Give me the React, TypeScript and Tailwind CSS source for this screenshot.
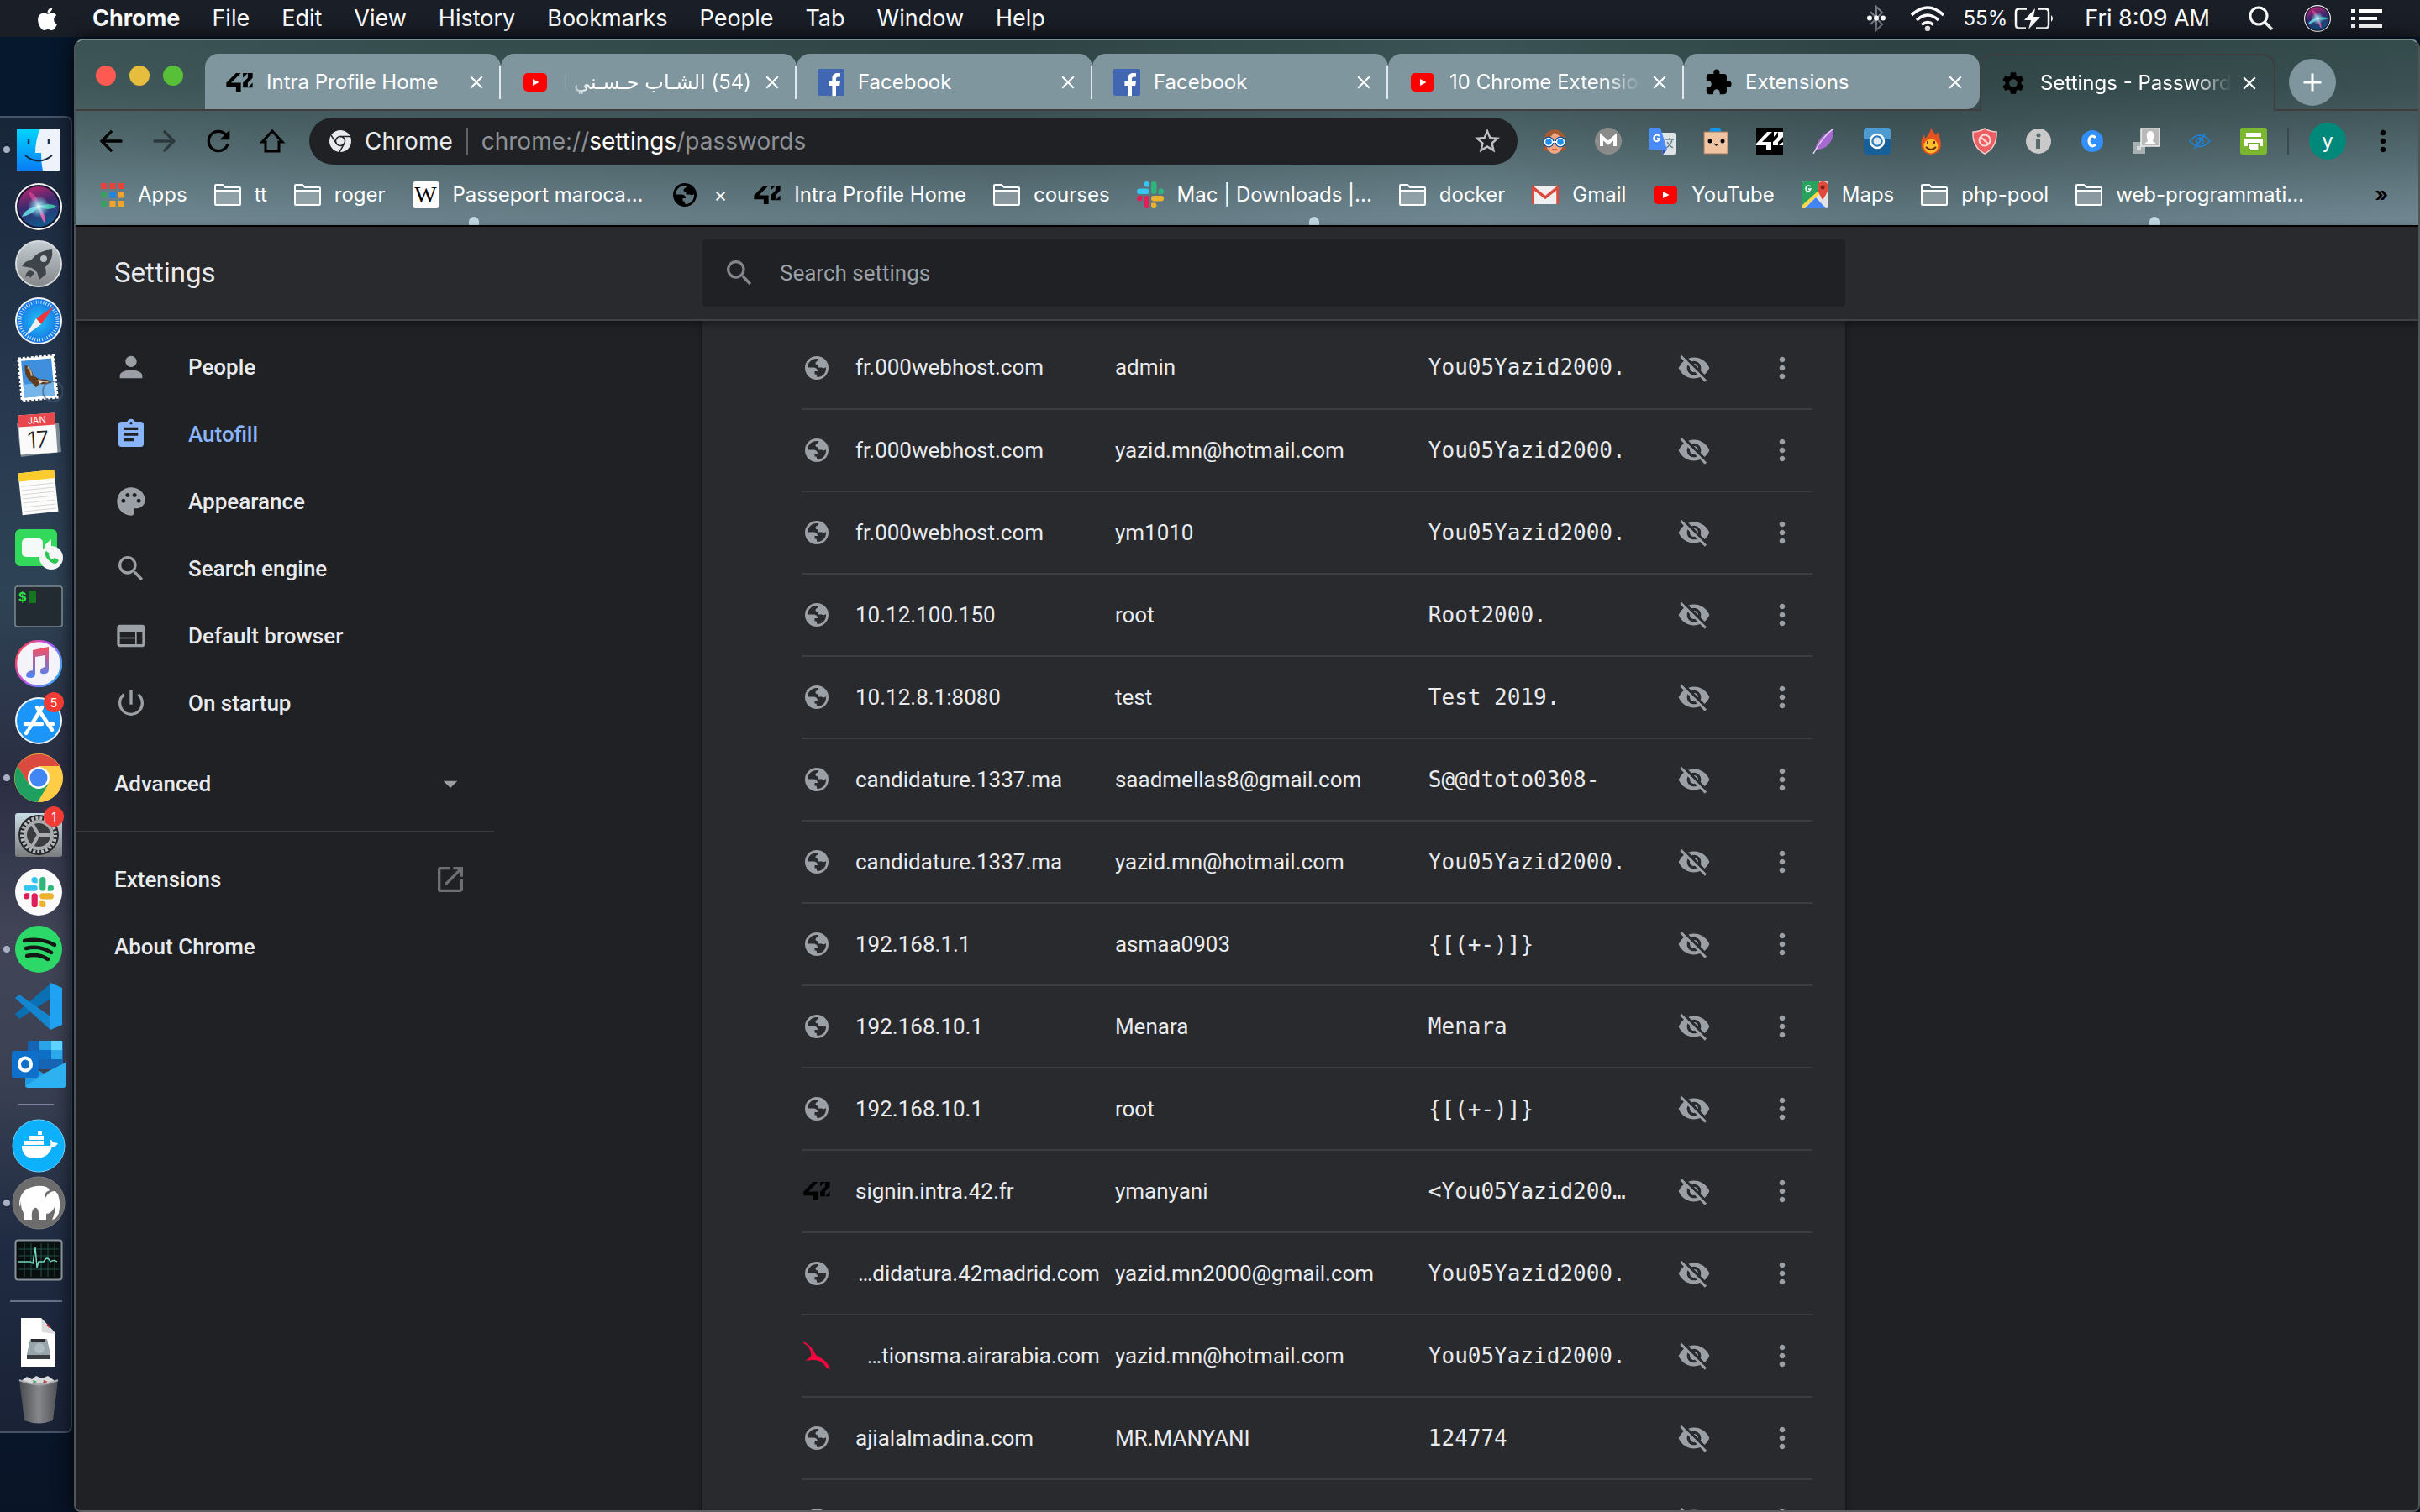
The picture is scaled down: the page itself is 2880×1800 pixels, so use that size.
import type { ReactNode } from "react";
import {
  MdAdd,
  MdArrowBack,
  MdArrowDropDown,
  MdArrowForward,
  MdAssignment,
  MdClose,
  MdExtension,
  MdMoreVert,
  MdOpenInNew,
  MdPalette,
  MdPerson,
  MdPowerSettingsNew,
  MdRefresh,
  MdSearch,
  MdSettings,
  MdStarBorder,
  MdVisibilityOff,
  MdWeb,
} from "react-icons/md";
import { FaApple } from "react-icons/fa";

/* ---------- shared glyphs ---------- */

function Logo42({ className }: { className: string }) {
  return (
    <svg viewBox="32 -52 896 630" className={className} fill="currentColor" aria-hidden="true">
      <polygon points="32,412.6 362.1,412.6 362.1,578 526.8,578 526.8,279.1 197.3,279.1 526.8,-51.1 362.1,-51.1 32,279.1" />
      <polygon points="597.9,114.2 762.7,-51.1 597.9,-51.1" />
      <polygon points="762.7,114.2 597.9,279.1 597.9,443.9 762.7,443.9 762.7,279.1 928,114.2 928,-51.1 762.7,-51.1" />
      <polygon points="928,279.1 762.7,443.9 928,443.9" />
    </svg>
  );
}

function GlobeIcon({ className }: { className: string }) {
  return (
    <svg viewBox="0 0 28 28" className={className} fill="currentColor" fillRule="evenodd" aria-hidden="true">
      <path d="M14 0a14 14 0 1 1 0 28 14 14 0 0 1 0-28zM3 13.500h7c3 0 5 1.500 5 4.500h-3.500v3.500h2l1 3.500C20.500 25 25 20.500 25 14.500c0-.5 0-1-.2-1.500-1.300 1.500-3.300 1.800-4.800.5h-4.500v-3c-1.500 0-3-.8-3-2.200C12.500 6 16 6.500 16 3.300 9 2 3 7.500 3 13.500z" />
    </svg>
  );
}

function YouTubeIcon() {
  return (
    <svg viewBox="0 0 30 22" className="h-[22px] w-[30px]" aria-hidden="true">
      <rect x="1" width="28" height="22" rx="5" fill="#ff0000" />
      <path d="M12 7l7.5 4-7.5 4z" fill="#fff" />
    </svg>
  );
}

function FacebookIcon() {
  return (
    <svg viewBox="0 0 32 32" className="h-8 w-8" aria-hidden="true">
      <rect width="32" height="32" rx="2" fill="#4267b2" />
      <path d="M22 32V20h4.2l.7-5H22v-3c0-1.5.6-2.4 2.6-2.4H27V5.300c-.6-.1-2-.2-3.500-.2-3.600 0-6.100 2.100-6.100 6.200V15h-4v5h4v12z" fill="#fff" />
    </svg>
  );
}

function FolderIcon() {
  return (
    <svg viewBox="0 0 32 26" className="h-[26px] w-8" aria-hidden="true">
      <path d="M1 24V2q0-1 1-1h8l3 3h17q1 0 1 1v19q0 1-1 1H2q-1 0-1-1z" fill="none" stroke="#fff" strokeWidth="2" />
      <path d="M2 8h28v16H2z" fill="#ffffff" fillOpacity="0.280" />
      <path d="M1 8h30" stroke="#fff" strokeWidth="2" />
    </svg>
  );
}

function SlackMark({ className }: { className: string }) {
  return (
    <svg viewBox="0 0 54 54" className={className} aria-hidden="true">
      <path fill="#36c5f0" d="M19.700 0a5.400 5.400 0 0 0 0 10.800h5.400V5.400A5.400 5.400 0 0 0 19.700 0m0 14.400H5.400a5.400 5.400 0 0 0 0 10.800h14.300a5.400 5.400 0 0 0 0-10.800" />
      <path fill="#2eb67d" d="M54 19.800a5.400 5.400 0 1 0-10.800 0v5.400h5.400a5.400 5.400 0 0 0 5.400-5.400m-14.400 0V5.400a5.400 5.400 0 1 0-10.800 0v14.400a5.400 5.400 0 1 0 10.800 0" />
      <path fill="#ecb22e" d="M34.200 54a5.400 5.400 0 0 0 0-10.800h-5.400v5.400a5.400 5.400 0 0 0 5.400 5.400m0-14.400h14.400a5.400 5.400 0 0 0 0-10.800H34.200a5.400 5.400 0 0 0 0 10.800" />
      <path fill="#e01e5a" d="M0 34.200a5.400 5.400 0 0 0 10.800 0v-5.400H5.400A5.400 5.400 0 0 0 0 34.200m14.400 0v14.400a5.400 5.400 0 1 0 10.800 0V34.200a5.400 5.400 0 1 0-10.800 0" />
    </svg>
  );
}

function SiriIcon({ className }: { className: string }) {
  return (
    <svg viewBox="0 0 56 56" className={className} aria-hidden="true">
      <defs>
        <radialGradient id="siriCore">
          <stop offset="0" stopColor="#fff" />
          <stop offset="0.400" stopColor="#8fe6f5" stopOpacity="0.700" />
          <stop offset="1" stopColor="#8fe6f5" stopOpacity="0" />
        </radialGradient>
        <linearGradient id="siriBase" x1="0.300" y1="0" x2="0.600" y2="1">
          <stop offset="0" stopColor="#b3266f" />
          <stop offset="0.450" stopColor="#3b2a6e" />
          <stop offset="1" stopColor="#0e5a8c" />
        </linearGradient>
      </defs>
      <circle cx="28" cy="28" r="28" fill="#f2f2f2" />
      <circle cx="28" cy="28" r="26" fill="#15122f" />
      <circle cx="28" cy="28" r="24" fill="url(#siriBase)" />
      <path d="M28 28Q14 28 8 40q12-2 20-12z" fill="#6ef0f5" fillOpacity="0.800" />
      <path d="M28 28q2 14 8 21 1-12-8-21z" fill="#f25fb0" fillOpacity="0.900" />
      <path d="M28 28q12-6 22 0-10 6-22 0z" fill="#43e0b5" fillOpacity="0.800" />
      <path d="M28 28Q18 20 16 10q12 4 12 18z" fill="#e0479b" fillOpacity="0.700" />
      <circle cx="28" cy="28" r="13" fill="url(#siriCore)" />
    </svg>
  );
}

/* ---------- menu bar ---------- */

const menus = ["File", "Edit", "View", "History", "Bookmarks", "People", "Tab", "Window", "Help"];

function MenuBar() {
  return (
    <header className="flex h-11 shrink-0 items-center justify-between bg-[#1a1e27] pr-11 pl-10 text-[27px] text-white">
      <nav aria-label="Menu bar" className="flex items-center gap-[38px]">
        <button type="button" aria-label="Apple menu" className="flex w-8 justify-center">
          <FaApple className="h-[31px] w-[31px]" />
        </button>
        <button type="button" className="font-bold">Chrome</button>
        {menus.map((m) => (
          <button type="button" key={m}>{m}</button>
        ))}
      </nav>
      <div className="flex items-center">
        <svg viewBox="0 0 24 32" className="h-8 w-6" aria-hidden="true">
          <path d="M5 8l14 15-7 7V2l7 7L5 23" fill="none" stroke="#777b84" strokeWidth="2" />
          <g fill="#fff">
            <circle cx="4" cy="15.500" r="3" />
            <circle cx="12" cy="15.500" r="3" />
            <circle cx="20" cy="15.500" r="3" />
          </g>
        </svg>
        <svg viewBox="0 0 42 30" className="ml-7 h-[30px] w-[42px]" fill="none" stroke="#fff" strokeWidth="3.500" aria-hidden="true">
          <path d="M2 11q19-18 38 0M8 17q13-12 26 0M14 22.500q7-6 14 0" />
          <circle cx="21" cy="27" r="1.500" fill="#fff" />
        </svg>
        <span className="ml-[22px] text-[24px]">55%</span>
        <svg viewBox="0 0 48 26" className="ml-2 h-[26px] w-12" fill="none" stroke="#fff" strokeWidth="2.500" aria-hidden="true">
          <path d="M15 1.500H6Q2 1.500 2 5.500v15q0 4 4 4h8M28 1.500h9q4 0 4 4v15q0 4-4 4H26" />
          <path d="M44 9q4 4 0 8z" fill="#fff" stroke="none" />
          <path d="M25 1L12 15h8l-3 11 14-15h-8z" fill="#fff" stroke="none" />
        </svg>
        <span className="ml-9">Fri 8:09 AM</span>
        <svg viewBox="0 0 30 30" className="ml-[46px] h-[30px] w-[30px]" fill="none" stroke="#fff" strokeWidth="3" aria-hidden="true">
          <circle cx="12" cy="12" r="10" />
          <path d="M19 19l9 9" strokeWidth="3.500" />
        </svg>
        <SiriIcon className="ml-9 h-8 w-8" />
        <svg viewBox="0 0 38 22" className="ml-6 h-[22px] w-[38px]" fill="#fff" aria-hidden="true">
          <path d="M0 0h5v4H0zM9 0h28v4H9zM0 9h5v4H0zM9 9h22v4H9zM0 18h5v4H0zM9 18h28v4H9z" />
        </svg>
      </div>
    </header>
  );
}

/* ---------- dock ---------- */

function DockIcon({ label, running, badge, children }: { label: string; running?: boolean; badge?: string; children: ReactNode }) {
  return (
    <li className="relative flex h-[68px] items-center pl-[14px]">
      {running && <span className="absolute left-1 h-2 w-2 rounded-full bg-[#a9b1c6]" />}
      <button type="button" aria-label={label} className="flex h-16 w-16 items-center justify-center">
        {children}
      </button>
      {badge && (
        <span className="absolute top-0 right-2 flex h-6 w-6 items-center justify-center rounded-full bg-[#f13b35] text-[14px] text-white">
          {badge}
        </span>
      )}
    </li>
  );
}

function Dock() {
  return (
    <aside className="mt-[94px] w-[86px] shrink-0 self-start rounded-r-lg border-t-2 border-r-2 border-b-2 border-[#46546a] bg-[linear-gradient(180deg,#18263a_0%,#28394f_22%,#2e4355_36%,#2b2e43_50%,#404456_62%,#3c4254_72%,#1f2b42_86%,#1a2236_100%)] pt-1 pb-1">
      <ul>
        <DockIcon label="Finder" running>
          <svg viewBox="0 0 52 50" className="h-[50px] w-[52px]">
            <defs>
              <linearGradient id="finderBlue" x1="0" y1="0" x2="0" y2="1">
                <stop offset="0" stopColor="#00d6ff" />
                <stop offset="1" stopColor="#0a7cf5" />
              </linearGradient>
            </defs>
            <rect width="52" height="50" rx="2" fill="#eef2fa" />
            <path d="M2 0h26q-6 14-6 29h7q0 12 2 21H2q-2 0-2-2V2q0-2 2-2z" fill="url(#finderBlue)" />
            <path d="M14 13v6M38 13v6" stroke="#16334f" strokeWidth="2.500" />
            <path d="M10 32q16 13 32 0" fill="none" stroke="#152a42" strokeWidth="2" />
          </svg>
        </DockIcon>
        <DockIcon label="Siri"><SiriIcon className="h-14 w-14" /></DockIcon>
        <DockIcon label="Launchpad">
          <svg viewBox="0 0 56 56" className="h-14 w-14">
            <defs>
              <linearGradient id="padGrey" x1="0" y1="0" x2="0" y2="1">
                <stop offset="0" stopColor="#c3cdd2" />
                <stop offset="1" stopColor="#848789" />
              </linearGradient>
            </defs>
            <circle cx="28" cy="28" r="27" fill="url(#padGrey)" stroke="#d7d9db" strokeWidth="2" />
            <path d="M44 11q2 12-8 21l1 8-8 7-3-9-6-5-12-2q4-7 11-7 8-12 25-13z" fill="#3f444a" />
            <path d="M17 36q6 1 6 4-3 1-5 5l-2-3-4 2q1-6 5-8z" fill="#3f444a" />
            <circle cx="34" cy="22" r="4" fill="#b9c1c5" />
          </svg>
        </DockIcon>
        <DockIcon label="Safari">
          <svg viewBox="0 0 56 56" className="h-14 w-14">
            <defs>
              <radialGradient id="safariBlue">
                <stop offset="0" stopColor="#20c2f5" />
                <stop offset="1" stopColor="#1673e6" />
              </radialGradient>
            </defs>
            <circle cx="28" cy="28" r="28" fill="#f3f4f5" />
            <circle cx="28" cy="28" r="26" fill="url(#safariBlue)" />
            <circle cx="28" cy="28" r="22.500" fill="none" stroke="#d4ebfb" strokeWidth="4" strokeDasharray="1 2" />
            <path d="M46 11L31 32l-6-7z" fill="#f5333a" />
            <path d="M12 46l13-21 6 7z" fill="#eef0f2" />
          </svg>
        </DockIcon>
        <DockIcon label="Mail">
          <svg viewBox="0 0 58 58" className="h-[58px] w-[58px]">
            <g transform="rotate(-5 29 29)">
              <rect x="7" y="4" width="42" height="50" fill="#fff" stroke="#fff" strokeWidth="3" strokeDasharray="3 2" />
              <rect x="10" y="7" width="36" height="44" fill="#3f8fdc" />
              <rect x="10" y="35" width="36" height="16" fill="#76b5ea" />
              <path d="M14 12q8 4 9 14l8 5q8-1 13 5l-10 1-5-1-4 4-3-4-5-6q-5-6-3-18z" fill="#5e3c22" />
              <path d="M17 15q4 4 4 11M33 33l7 2" stroke="#c9a982" strokeWidth="2" fill="none" />
              <path d="M28 31l7 2-5 3z" fill="#e8dccb" />
            </g>
            <circle cx="46" cy="45" r="12" fill="none" stroke="#425a76" strokeWidth="2" strokeOpacity="0.600" />
          </svg>
        </DockIcon>
        <DockIcon label="Calendar">
          <svg viewBox="0 0 58 56" className="h-14 w-[58px]">
            <path d="M3 14l5 40 48-6-3-34z" fill="#7b8791" />
            <g transform="rotate(-4 28 28)">
              <rect x="6" y="3" width="44" height="47" fill="#fafafa" />
              <rect x="6" y="3" width="44" height="14" fill="#e8474b" />
              <text x="28" y="14" textAnchor="middle" fontSize="11" fill="#fff" fontFamily="Inter, sans-serif">JAN</text>
              <text x="28" y="43" textAnchor="middle" fontSize="27" fill="#222" fontFamily="Inter, sans-serif" fontWeight="300">17</text>
            </g>
          </svg>
        </DockIcon>
        <DockIcon label="Notes">
          <svg viewBox="0 0 58 58" className="h-[58px] w-[58px]">
            <g transform="rotate(-6 29 29)">
              <rect x="7" y="4" width="43" height="50" fill="#fcfcfa" />
              <rect x="7" y="4" width="43" height="10" fill="#fccb2e" />
              <path d="M9 20h39M9 25h39M9 30h39M9 35h39M9 40h39M9 45h39M9 50h39" stroke="#d5d7d9" strokeWidth="1" />
            </g>
          </svg>
        </DockIcon>
        <DockIcon label="FaceTime">
          <svg viewBox="0 0 58 50" className="h-[50px] w-[58px]">
            <rect x="1" y="1" width="50" height="44" rx="6" fill="#33d95b" />
            <rect x="9" y="12" width="25" height="22" rx="5" fill="#f6faf6" />
            <path d="M36 20l8-7v16l-8-4z" fill="#f6faf6" />
            <circle cx="44" cy="35" r="14" fill="#f4f6f5" />
            <path d="M38 27q-4 3 2 10 7 7 11 4l2-3-5-3-3 2q-3-2-4-5l1-2z" fill="#2bc653" />
          </svg>
        </DockIcon>
        <DockIcon label="Terminal">
          <svg viewBox="0 0 58 50" className="h-[50px] w-[58px]">
            <rect x="1" y="1" width="56" height="48" rx="3" fill="#222b32" stroke="#7d8a93" strokeWidth="1.500" />
            <text x="5" y="19" fontSize="16" fontWeight="700" fill="#2eea46" fontFamily="'Liberation Mono', monospace">$</text>
            <rect x="18" y="6" width="8" height="15" fill="#14771f" />
          </svg>
        </DockIcon>
        <DockIcon label="iTunes">
          <svg viewBox="0 0 56 56" className="h-14 w-14">
            <defs>
              <linearGradient id="tunes" x1="0" y1="0.300" x2="1" y2="0.900">
                <stop offset="0" stopColor="#fb4657" />
                <stop offset="0.400" stopColor="#b94ff0" />
                <stop offset="1" stopColor="#1fb8fb" />
              </linearGradient>
              <linearGradient id="tunesNote" x1="0" y1="0" x2="0" y2="1">
                <stop offset="0" stopColor="#fb4c60" />
                <stop offset="1" stopColor="#4a86f5" />
              </linearGradient>
            </defs>
            <circle cx="28" cy="28" r="27" fill="#f4f3f9" stroke="url(#tunes)" strokeWidth="2.500" />
            <path d="M21 12l19-4v27q0 5-5 5-5 1-5-3 0-4 6-5V18l-12 2v20q0 5-6 5-5 0-5-3 0-5 8-6z" fill="url(#tunesNote)" />
          </svg>
        </DockIcon>
        <DockIcon label="App Store" badge="5">
          <svg viewBox="0 0 56 56" className="h-14 w-14">
            <circle cx="28" cy="28" r="28" fill="#f1f4f7" />
            <circle cx="28" cy="28" r="26" fill="#1b95f7" />
            <path d="M12 32h20M39 32h6M32 12L17 37M26 12l18 27M15 40l-2 3" stroke="#fff" strokeWidth="4.500" strokeLinecap="round" />
          </svg>
        </DockIcon>
        <DockIcon label="Chrome" running>
          <svg viewBox="0 0 58 58" className="h-[58px] w-[58px]">
            <circle cx="29" cy="29" r="29" fill="#ffcd45" />
            <path d="M54 15A29 29 0 0 0 4 15l13 21 12-21z" fill="#db4a3e" />
            <path d="M4 15a29 29 0 0 0 24 43l13-22-12 6-12-6z" fill="#20a060" />
            <path d="M29 15h25a29 29 0 0 1-26 43l13-22z" fill="#ffcd45" />
            <circle cx="29" cy="29" r="13" fill="#fff" />
            <circle cx="29" cy="29" r="10.500" fill="#4285f4" />
          </svg>
        </DockIcon>
        <DockIcon label="System Preferences" badge="1">
          <svg viewBox="0 0 58 54" className="h-[54px] w-[58px]">
            <defs>
              <linearGradient id="prefs" x1="0" y1="0" x2="0" y2="1">
                <stop offset="0" stopColor="#c9dde4" />
                <stop offset="1" stopColor="#7b7d80" />
              </linearGradient>
            </defs>
            <rect x="1" y="1" width="56" height="52" rx="3" fill="url(#prefs)" />
            <circle cx="29" cy="27" r="24" fill="#26282b" />
            <circle cx="29" cy="27" r="20" fill="none" stroke="#b9bcbf" strokeWidth="4" strokeDasharray="3 2" />
            <circle cx="29" cy="27" r="16" fill="#3a3c3f" stroke="#a9acaf" strokeWidth="4" />
            <path d="M29 27h16M29 27l-8-14M29 27l-8 14" stroke="#a9acaf" strokeWidth="4" />
          </svg>
        </DockIcon>
        <DockIcon label="Slack">
          <span className="flex h-14 w-14 items-center justify-center rounded-full bg-[#fafafa]">
            <SlackMark className="h-9 w-9" />
          </span>
        </DockIcon>
        <DockIcon label="Spotify" running>
          <svg viewBox="0 0 56 56" className="h-14 w-14">
            <circle cx="28" cy="28" r="28" fill="#2cd868" />
            <path d="M11 18q20-4 36 5M13 27q16-4 30 5M14 36q14-3 25 4" fill="none" stroke="#141714" strokeWidth="4.500" strokeLinecap="round" />
          </svg>
        </DockIcon>
        <DockIcon label="Visual Studio Code">
          <svg viewBox="0 0 56 56" className="h-14 w-14">
            <path d="M0 37l42-36v18L5 43z" fill="#0b6fb3" />
            <path d="M0 18l5-4 37 26v16z" fill="#1386cf" />
            <path d="M42 0l14 6v44l-14 6z" fill="#1fa2f1" />
          </svg>
        </DockIcon>
        <DockIcon label="Outlook">
          <svg viewBox="0 0 64 58" className="h-[58px] w-16">
            <rect x="19" y="2" width="42" height="34" rx="2" fill="#1565b4" />
            <path d="M33 2h14v11H33z" fill="#2aa4e8" />
            <path d="M47 2h13v11H47z" fill="#5ed3ff" />
            <path d="M47 13h13v11H47z" fill="#2ba9ea" />
            <path d="M33 13h14v11H33z" fill="#0f6fc4" />
            <path d="M16 28l24 14 24-14v27q0 3-3 3H19q-3 0-3-3z" fill="#1f9ae3" />
            <path d="M16 56l24-16 24-12v27q0 3-3 3H19z" fill="#2db1f0" />
            <rect y="14" width="32" height="32" rx="3" fill="#0f70cb" />
            <ellipse cx="16" cy="30" rx="7" ry="7.500" fill="none" stroke="#fff" strokeWidth="4" />
          </svg>
        </DockIcon>
        <li className="flex h-[30px] items-center pl-[22px]"><span className="h-0.5 w-[42px] bg-[#79819a]" /></li>
        <DockIcon label="Docker">
          <svg viewBox="0 0 64 64" className="h-16 w-16">
            <circle cx="32" cy="32" r="31" fill="#0db0fb" stroke="#6fd1fb" strokeWidth="1" />
            <path d="M12 32h33q3-1 0-8 3 1 4 4l6 1q-3 5-7 4-4 14-20 14-16 0-16-15z" fill="#fff" />
            <path d="M15 26h5v5h-5zM21 26h5v5h-5zM27 26h5v5h-5zM33 26h5v5h-5zM21 20h5v5h-5zM27 20h5v5h-5zM33 20h5v5h-5zM31 15h5v4h-5z" fill="#fff" />
          </svg>
        </DockIcon>
        <DockIcon label="MAMP" running>
          <svg viewBox="0 0 64 64" className="h-16 w-16">
            <circle cx="32" cy="32" r="31" fill="#6c6c6c" stroke="#7d7d7d" strokeWidth="1" />
            <path d="M9 34q0-19 20-22 14-1 16 5-8 3-5 9 5-9 12-8 6 6 5 20-1 13-9 14 4-8 3-15-4 8-10 8v7H32q1-16-5-14-4 2-3 14H15q0-8-3-12-1-3-1-11l-1 8z" fill="#fff" />
          </svg>
        </DockIcon>
        <DockIcon label="Activity Monitor">
          <svg viewBox="0 0 58 50" className="h-[50px] w-[58px]">
            <rect x="1.500" y="1.500" width="55" height="47" rx="3" fill="#0b0e0e" stroke="#87929b" strokeWidth="2" />
            <path d="M5 12h48M5 20h48M5 36h48M12 5v40M20 5v40M32 5v40M40 5v40M48 5v40" stroke="#1f5346" strokeWidth="1" />
            <path d="M5 27h14l3 2 3-19 2 24 2-7h6q4-8 8 0 4-3 8 0" fill="none" stroke="#74d8bc" strokeWidth="1.500" />
          </svg>
        </DockIcon>
        <li className="flex h-[30px] items-center pl-3"><span className="h-0.5 w-[62px] bg-[#68728a]" /></li>
        <DockIcon label="Documents">
          <svg viewBox="0 0 44 60" className="h-[60px] w-11">
            <path d="M1 1h24l17 18v40H1z" fill="#fff" />
            <path d="M25 1l1 17 16 2z" fill="#d8dadc" />
            <path d="M32 9l3 3" stroke="#d22" strokeWidth="2" />
            <path d="M12 26h20l4 18v6H8v-6z" fill="#97a5ab" />
            <path d="M8 45h28v5H8z" fill="#3a3d40" />
            <path d="M13 26h17v4H13z" fill="#2b2e31" />
            <circle cx="23" cy="37" r="6" fill="#aebbc0" />
          </svg>
        </DockIcon>
        <DockIcon label="Trash">
          <svg viewBox="0 0 48 60" className="h-[60px] w-12">
            <defs>
              <linearGradient id="bin">
                <stop offset="0" stopColor="#4a4c4f" />
                <stop offset="0.500" stopColor="#8b8d90" />
                <stop offset="1" stopColor="#515356" />
              </linearGradient>
            </defs>
            <path d="M3 8l7-5 6 3 5-4 7 3 7-3 7 5 3 4-20 4z" fill="#d9dadb" />
            <path d="M17 7l5 2-4 2z" fill="#3b9c6b" />
            <path d="M30 7l5 2-6 2z" fill="#b8443e" />
            <path d="M1 7q23 10 46 0l-6 48q-17 7-34 0z" fill="url(#bin)" fillOpacity="0.950" />
            <path d="M1 7q23 10 46 0" fill="none" stroke="#a5a7a9" strokeWidth="2" />
          </svg>
        </DockIcon>
      </ul>
    </aside>
  );
}

/* ---------- tab strip ---------- */

function CloseButton() {
  return (
    <button type="button" aria-label="Close tab" className="shrink-0 text-white">
      <MdClose className="h-[26px] w-[26px]" />
    </button>
  );
}

function Tab({ icon, title, fade, rtl, last }: { icon: ReactNode; title: string; fade?: boolean; rtl?: boolean; last?: boolean }) {
  return (
    <div className={`relative flex h-[66px] min-w-0 flex-1 items-center rounded-t-2xl bg-[#7f969f] pt-0.5 pr-4 pl-[25px] ${last ? "rounded-br-2xl" : ""}`}>
      <span className="flex w-8 shrink-0 justify-center text-black">{icon}</span>
      <span
        dir={rtl ? "rtl" : "ltr"}
        className={`ml-4 min-w-0 flex-1 overflow-hidden whitespace-nowrap text-[24px] text-white ${
          fade ? "mr-2 [mask-image:linear-gradient(to_right,black_80%,transparent)]" : ""
        } ${rtl ? "mr-3 [mask-image:linear-gradient(to_left,black_85%,transparent)]" : ""}`}
      >
        {title}
      </span>
      <CloseButton />
      {!last && <span className="absolute top-[14px] right-0 h-10 w-0.5 bg-[#e3e9eb]" />}
    </div>
  );
}

function TabStrip() {
  return (
    <div className="flex h-[84px] items-end">
      <div className="flex h-full w-[154px] shrink-0 items-center gap-4 border-b-2 border-[#413d3e] pt-0.5 pl-6">
        <button type="button" aria-label="Close window" className="h-6 w-6 rounded-full bg-[#ff5a52]" />
        <button type="button" aria-label="Minimise window" className="h-6 w-6 rounded-full bg-[#e6bd3c]" />
        <button type="button" aria-label="Zoom window" className="h-6 w-6 rounded-full bg-[#57c038]" />
      </div>
      <div className="flex min-w-0 flex-1 border-b-2 border-[#413d3e]">
        <Tab icon={<Logo42 className="h-[22px] w-8" />} title="Intra Profile Home" />
        <Tab icon={<YouTubeIcon />} title="(54) الشـاب حـسـني البيضاء" rtl />
        <Tab icon={<FacebookIcon />} title="Facebook" />
        <Tab icon={<FacebookIcon />} title="Facebook" />
        <Tab icon={<YouTubeIcon />} title="10 Chrome Extensions" fade />
        <Tab icon={<MdExtension className="h-[34px] w-[34px] shrink-0" />} title="Extensions" last />
      </div>
      <div className="flex h-[68px] w-[352px] shrink-0 items-center rounded-t-2xl border-x-2 border-t-2 border-[#413d3e] pr-4 pl-[22px]">
        <MdSettings className="h-8 w-8 shrink-0 text-black" />
        <span className="mr-2 ml-4 min-w-0 flex-1 overflow-hidden whitespace-nowrap text-[24px] text-white [mask-image:linear-gradient(to_right,black_80%,transparent)]">
          Settings - Passwords
        </span>
        <CloseButton />
      </div>
      <div className="flex h-full w-[170px] shrink-0 items-center border-b-2 border-[#413d3e] pt-[18px] pl-4">
        <button type="button" aria-label="New tab" className="flex h-14 w-14 items-center justify-center rounded-full bg-[#7f969f] text-white">
          <MdAdd className="h-9 w-9" />
        </button>
      </div>
    </div>
  );
}

/* ---------- toolbar ---------- */

const extensionIcons: { name: string; art: ReactNode }[] = [
  {
    name: "Face with glasses",
    art: (
      <>
        <path d="M2 26q3-3 2-10Q3 9 8 5q8-6 16 0 5 4 4 11-1 7 2 10l-6 2H8z" fill="#a35b33" />
        <path d="M6 15q3-2 10-9 8 4 10 9v7q-4 9-10 9T6 22z" fill="#f2a57e" />
        <circle cx="9" cy="17" r="6.500" fill="#0a4fa0" />
        <circle cx="23" cy="17" r="6.500" fill="#0a4fa0" />
        <circle cx="9" cy="17" r="4.500" fill="#1c8ef0" stroke="#fff" strokeWidth="1.500" />
        <circle cx="23" cy="17" r="4.500" fill="#1c8ef0" stroke="#fff" strokeWidth="1.500" />
        <path d="M14 17h4" stroke="#fff" strokeWidth="2" />
        <path d="M13 26h6" stroke="#c24d4d" strokeWidth="1.500" />
      </>
    ),
  },
  {
    name: "Momentum",
    art: (
      <>
        <circle cx="16" cy="16" r="16" fill="#8a8a8a" />
        <path d="M8 22V11l8 7 8-7v11" fill="none" stroke="#fff" strokeWidth="4" />
      </>
    ),
  },
  {
    name: "Translate",
    art: (
      <>
        <path d="M13 6h17q2 0 2 2v22q0 2-2 2H17z" fill="#dfe3e6" />
        <path d="M20 14h10M25 12v2M28 15q-2 6-7 9M22 17q3 5 7 7" fill="none" stroke="#6a8894" strokeWidth="1.500" />
        <path d="M2 0h12l8 26H2q-2 0-2-2V2q0-2 2-2z" fill="#4a8cf5" />
        <path d="M16 26h6l-5 6z" fill="#2a4fb8" />
        <path d="M13 10q-3-3-6 0-2 4 1 6 4 1 5-3h-3" fill="none" stroke="#fff" strokeWidth="2" />
      </>
    ),
  },
  {
    name: "Box with face",
    art: (
      <>
        <path d="M8 5l2-5h11l2 5z" fill="#0b95ef" />
        <rect x="2" y="5" width="28" height="26" fill="#efc4a2" stroke="#a5785a" strokeWidth="1" />
        <circle cx="9" cy="16" r="2.500" />
        <circle cx="24" cy="16" r="2.500" />
        <path d="M14 19l2.500 2 2.500-2" fill="none" stroke="#222" strokeWidth="1.500" />
      </>
    ),
  },
  {
    name: "42",
    art: (
      <>
        <rect width="32" height="32" />
        <g fill="#fff">
          <path d="M0 19L13 5h6L7 17h11v10h-6v-6H0z" />
          <path d="M21 11V5h5zM26 5h6v6l-6 6v4h-6v-4l6-6zM32 17v4h-5z" />
        </g>
      </>
    ),
  },
  {
    name: "Feather",
    art: (
      <>
        <path d="M28 1q1 14-9 22-6 3-13 4Q8 11 28 1z" fill="#a569cf" />
        <path d="M28 1Q14 12 4 31" fill="none" stroke="#e6d0f5" strokeWidth="1.500" />
      </>
    ),
  },
  {
    name: "Refresh",
    art: (
      <>
        <rect width="32" height="32" rx="4" fill="#175f99" />
        <path d="M4 0h24q4 0 4 4v10H0V4q0-4 4-4z" fill="#4c9bd3" />
        <circle cx="16" cy="16" r="8" fill="#2b7ab5" stroke="#fff" strokeWidth="2.500" />
        <circle cx="16" cy="16" r="4.500" fill="#dfeaf2" />
      </>
    ),
  },
  {
    name: "Flame",
    art: (
      <>
        <path d="M16 0q2 5 6 9l3-4q0 5 2 9 4 16-11 18Q2 30 5 14l3-6 1 5q6-5 7-13z" fill="#e8501e" />
        <circle cx="16" cy="22" r="8.500" fill="#fdbd2c" />
        <path d="M12 16v4M20 16v4M10 23q6 6 12 0" fill="none" stroke="#6b2a0b" strokeWidth="2" />
      </>
    ),
  },
  {
    name: "Shield",
    art: (
      <>
        <path d="M16 1q7 4 14 4 1 18-14 26Q1 23 2 5q7 0 14-4z" fill="#ee5f63" stroke="#f5c9ca" strokeWidth="1.500" />
        <circle cx="16" cy="15" r="6.500" fill="none" stroke="#fbdcdc" strokeWidth="2" />
        <path d="M11 11l10 9" stroke="#fbdcdc" strokeWidth="2" />
      </>
    ),
  },
  {
    name: "Information",
    art: (
      <>
        <circle cx="16" cy="16" r="15" fill="#c9c9c9" />
        <path d="M13 14h5v11h-5z" fill="#566a6b" />
        <circle cx="16" cy="9" r="2.500" fill="#566a6b" />
      </>
    ),
  },
  {
    name: "Letter C",
    art: (
      <>
        <circle cx="16" cy="16" r="13" fill="#3290fb" />
        <path d="M20 12q-4-4-7 0-2 4 0 8 3 4 7 0" fill="none" stroke="#fff" strokeWidth="3" />
      </>
    ),
  },
  {
    name: "Profiles",
    art: (
      <>
        <rect y="17" width="15" height="14" fill="#a7b0b2" />
        <path d="M5 22h5v5H5z" fill="#d5dadb" />
        <rect x="10" y="1" width="22" height="21" fill="#b9b9b9" stroke="#efefef" strokeWidth="1.500" />
        <path d="M21 4q5 0 4 8l-1 4 5 4H13l5-4-1-4q-1-8 4-8z" fill="#fff" />
      </>
    ),
  },
  {
    name: "Hidden eye",
    art: (
      <>
        <path d="M4 16q12-14 24 0-12 13-24 0z" fill="none" stroke="#1f83d8" strokeWidth="1.500" />
        <circle cx="16" cy="16" r="4" fill="none" stroke="#1f83d8" strokeWidth="1.500" />
        <path d="M10 25L22 7" stroke="#1f83d8" strokeWidth="2" />
      </>
    ),
  },
  {
    name: "Print",
    art: (
      <>
        <rect width="32" height="32" rx="3" fill="#7cb82f" />
        <rect x="7" y="6" width="18" height="5" fill="#fff" />
        <path d="M5 13h22v9h-4v-4H9v4H5z" fill="#fff" />
        <path d="M10 19h12v8h-9l-3-3z" fill="#fff" stroke="#5f9720" strokeWidth="1" />
      </>
    ),
  },
];

function Toolbar() {
  return (
    <div className="flex h-[72px] items-center pr-[22px] pl-[22px] text-black">
      <div className="flex shrink-0 items-center gap-6">
        <button type="button" aria-label="Back"><MdArrowBack className="h-10 w-10" /></button>
        <button type="button" aria-label="Forward" className="text-black/45"><MdArrowForward className="h-10 w-10" /></button>
        <button type="button" aria-label="Reload"><MdRefresh className="h-10 w-10" /></button>
        <button type="button" aria-label="Home">
          <svg viewBox="0 0 40 40" className="h-10 w-10" fill="none" stroke="currentColor" strokeWidth="3">
            <path d="M8 21L20 8l12 13h-4v11H12V21z" />
          </svg>
        </button>
      </div>
      <div className="ml-6 flex h-14 flex-1 items-center rounded-full bg-[#202124] pr-[18px] pl-6 text-[28px]">
        <svg viewBox="0 0 26 26" className="h-[26px] w-[26px] shrink-0" aria-hidden="true">
          <circle cx="13" cy="13" r="13" fill="#e8eaed" />
          <circle cx="13" cy="13" r="5.500" fill="#e8eaed" stroke="#202124" strokeWidth="1.500" />
          <path d="M13 7.500h12M8.200 15.700L2 6M17.800 15.700L12 26" stroke="#202124" strokeWidth="1.500" />
        </svg>
        <span className="ml-4 border-r-2 border-[#5f6368] pr-4 leading-8 text-[#e8eaed]">Chrome</span>
        <span role="textbox" aria-label="Address" className="ml-4 flex-1 text-[#8d9196]">
          chrome://<span className="text-white">settings</span>/passwords
        </span>
        <button type="button" aria-label="Bookmark this tab" className="text-[#bfc1c4]">
          <MdStarBorder className="h-9 w-9" />
        </button>
      </div>
      <div className="ml-7 flex shrink-0 items-center gap-8">
        {extensionIcons.map((e) => (
          <button type="button" aria-label={e.name} key={e.name}>
            <svg viewBox="0 0 32 32" className="h-8 w-8">{e.art}</svg>
          </button>
        ))}
      </div>
      <span className="mx-6 h-8 w-0.5 shrink-0 bg-[#39494d]" />
      <button type="button" aria-label="Profile" className="flex h-11 w-11 shrink-0 items-center justify-center rounded-full bg-[#00897b] text-[24px] leading-none text-white">
        y
      </button>
      <button type="button" aria-label="Menu" className="ml-6 shrink-0"><MdMoreVert className="h-10 w-10" /></button>
    </div>
  );
}

/* ---------- bookmarks ---------- */

const appDots = ["#e8433a", "#e8433a", "#e8433a", "#36a160", "#1c88e5", "#f2a32b", "#36a160", "#f2a32b", "#f2a32b"];

const bookmarks: { title: string; icon: ReactNode }[] = [
  {
    title: "Apps",
    icon: (
      <svg viewBox="0 0 28 28" className="h-7 w-7 shrink-0">
        {appDots.map((c, i) => (
          <rect key={i} x={(i % 3) * 10.5} y={Math.floor(i / 3) * 10.5} width="7" height="7" fill={c} />
        ))}
      </svg>
    ),
  },
  { title: "tt", icon: <FolderIcon /> },
  { title: "roger", icon: <FolderIcon /> },
  {
    title: "Passeport maroca...",
    icon: (
      <span className="flex h-8 w-8 items-center justify-center rounded bg-white font-['Liberation_Serif',serif] text-[28px] leading-none text-black">W</span>
    ),
  },
  { title: "×", icon: <GlobeIcon className="mx-1 h-7 w-7 text-black" /> },
  { title: "Intra Profile Home", icon: <Logo42 className="h-[22px] w-8 text-black" /> },
  { title: "courses", icon: <FolderIcon /> },
  { title: "Mac | Downloads |...", icon: <SlackMark className="h-8 w-8" /> },
  { title: "docker", icon: <FolderIcon /> },
  {
    title: "Gmail",
    icon: (
      <svg viewBox="0 0 32 24" className="h-6 w-8">
        <rect x="1" y="1" width="30" height="22" rx="2" fill="#f0f0f0" />
        <path d="M1 23V3l15 12L31 3v20" fill="none" stroke="#dd4b3e" strokeWidth="3.500" />
      </svg>
    ),
  },
  { title: "YouTube", icon: <YouTubeIcon /> },
  {
    title: "Maps",
    icon: (
      <svg viewBox="0 0 32 32" className="h-8 w-8">
        <rect width="32" height="32" rx="3" fill="#e3e3e3" />
        <path d="M3 0h18v12L0 31V3q0-3 3-3z" fill="#2aa25f" />
        <path d="M17 19L4 32h25z" fill="#4386f3" />
        <path d="M20 11L0 29v3h3l19-18z" fill="#fcd74b" />
        <path d="M25 0q7 0 7 7 0 5-7 15-6-10-6-15 0-7 6-7z" fill="#df4a3d" />
        <circle cx="25" cy="7" r="2.500" fill="#7d231c" />
        <path d="M11 6q-3-2-5 0-2 3 0 5 3 2 5-2H8" fill="none" stroke="#fff" strokeWidth="1.500" />
      </svg>
    ),
  },
  { title: "php-pool", icon: <FolderIcon /> },
  { title: "web-programmati...", icon: <FolderIcon /> },
];

function BookmarksBar() {
  return (
    <div className="flex h-16 items-center justify-between pr-9 pb-2 pl-[30px] text-[24px] text-white">
      <ul className="flex items-center gap-8">
        {bookmarks.map((b, i) => (
          <li key={i}>
            <a href="#bookmark" className="flex items-center gap-4 whitespace-nowrap">
              {b.icon}
              {b.title}
            </a>
          </li>
        ))}
      </ul>
      <button type="button" aria-label="More bookmarks" className="font-bold text-black">»</button>
    </div>
  );
}

/* ---------- settings page ---------- */

const sections = [
  { label: "People", Icon: MdPerson },
  { label: "Autofill", Icon: MdAssignment, active: true },
  { label: "Appearance", Icon: MdPalette },
  { label: "Search engine", Icon: MdSearch },
  { label: "Default browser", Icon: MdWeb },
  { label: "On startup", Icon: MdPowerSettingsNew },
];

function Sidebar() {
  return (
    <nav aria-label="Settings sections" className="pt-[15px] text-[26px] font-medium text-[#e8eaed]">
      {sections.map(({ label, Icon, active }) => (
        <a key={label} href="#section" className={`flex h-20 items-center pl-[46px] ${active ? "text-[#8ab4f8]" : ""}`}>
          <Icon className={`mr-12 h-10 w-10 ${active ? "" : "text-[#9aa0a6]"}`} />
          {label}
        </a>
      ))}
      <div className="mt-2 w-[498px] border-b-2 border-[#3a3b3e] pb-2">
        <button type="button" className="flex h-24 w-full items-center justify-between pr-8 pl-[46px] font-medium">
          Advanced
          <MdArrowDropDown className="h-10 w-10 text-[#9aa0a6]" />
        </button>
      </div>
      <a href="#extensions" className="mt-4 flex h-20 w-[498px] items-center justify-between pr-8 pl-[46px]">
        Extensions
        <MdOpenInNew className="h-10 w-10 text-[#6b6e72]" />
      </a>
      <a href="#about" className="flex h-20 items-center pl-[46px]">About Chrome</a>
    </nav>
  );
}

type Entry = { site: string; user: string; pass: string; icon?: "42" | "airarabia" };

const entries: Entry[] = [
  { site: "fr.000webhost.com", user: "admin", pass: "You05Yazid2000." },
  { site: "fr.000webhost.com", user: "yazid.mn@hotmail.com", pass: "You05Yazid2000." },
  { site: "fr.000webhost.com", user: "ym1010", pass: "You05Yazid2000." },
  { site: "10.12.100.150", user: "root", pass: "Root2000." },
  { site: "10.12.8.1:8080", user: "test", pass: "Test 2019." },
  { site: "candidature.1337.ma", user: "saadmellas8@gmail.com", pass: "S@@dtoto0308-" },
  { site: "candidature.1337.ma", user: "yazid.mn@hotmail.com", pass: "You05Yazid2000." },
  { site: "192.168.1.1", user: "asmaa0903", pass: "{[(+-)]}" },
  { site: "192.168.10.1", user: "Menara", pass: "Menara" },
  { site: "192.168.10.1", user: "root", pass: "{[(+-)]}" },
  { site: "signin.intra.42.fr", user: "ymanyani", pass: "<You05Yazid200…", icon: "42" },
  { site: "…didatura.42madrid.com", user: "yazid.mn2000@gmail.com", pass: "You05Yazid2000." },
  { site: "…tionsma.airarabia.com", user: "yazid.mn@hotmail.com", pass: "You05Yazid2000.", icon: "airarabia" },
  { site: "ajialalmadina.com", user: "MR.MANYANI", pass: "124774" },
  { site: "www.amendil-h.com", user: "yazid.mn@hotmail.com", pass: "You05Yazid2000." },
];

function SiteIcon({ kind }: { kind?: Entry["icon"] }) {
  if (kind === "42") return <Logo42 className="h-[22px] w-8 text-black" />;
  if (kind === "airarabia")
    return (
      <svg viewBox="0 0 32 32" className="h-8 w-8" aria-hidden="true">
        <path d="M0 0l4 2q7 5 10 13l4 3q9 4 13 13l-3-1q-3-6-10-9l-5-1-8 1 5-4q1-11-10-17z" fill="#f5063f" stroke="#f5063f" strokeWidth="1.500" />
      </svg>
    );
  return <GlobeIcon className="h-7 w-7 text-[#9aa0a6]" />;
}

function PasswordTable() {
  return (
    <table className="w-full table-fixed text-left text-[26px] text-[#e8eaed]">
      <caption className="sr-only">Saved passwords</caption>
      <colgroup>
        <col className="w-[31%]" />
        <col className="w-[31%]" />
        <col />
        <col className="w-[72px]" />
        <col className="w-[105px]" />
      </colgroup>
      <tbody>
        {entries.map((e, i) => (
          <tr key={i} className="h-[98px] border-b-2 border-[#3c3d40]">
            <td>
              <div className="flex items-center pr-[18px]">
                <span className="mr-7 flex w-9 shrink-0 items-center justify-center">
                  <SiteIcon kind={e.icon} />
                </span>
                <span className={`min-w-0 flex-1 whitespace-nowrap ${e.site.startsWith("…") ? "text-right" : ""}`}>
                  {e.site}
                </span>
              </div>
            </td>
            <td>{e.user}</td>
            <td className="font-['DejaVu_Sans_Mono',monospace]">{e.pass}</td>
            <td>
              <button type="button" aria-label="Hide password" className="mx-auto block text-[#9aa0a6]">
                <MdVisibilityOff className="h-10 w-10" />
              </button>
            </td>
            <td>
              <button type="button" aria-label="More actions" className="mr-4 ml-auto block text-[#9aa0a6]">
                <MdMoreVert className="h-10 w-10" />
              </button>
            </td>
          </tr>
        ))}
      </tbody>
    </table>
  );
}

function SettingsPage() {
  return (
    <div className="flex min-h-0 flex-1 flex-col bg-[#202124] font-['Roboto',sans-serif]">
      <div className="relative z-10 grid h-28 shrink-0 grid-cols-[746px_minmax(0,1360px)_1fr] items-center border-b-2 border-[#414245] bg-[#292a2d] shadow-[0_2px_10px_rgba(0,0,0,0.5)]">
        <h1 className="pl-[46px] text-[33px] text-[#e8eaed]">Settings</h1>
        <label className="flex h-20 items-center rounded bg-[#202124] pl-6">
          <span className="sr-only">Search settings</span>
          <MdSearch className="h-10 w-10 text-[#80868b]" />
          <input type="search" placeholder="Search settings" className="ml-7 flex-1 bg-transparent text-[26px] outline-none placeholder:text-[#9aa0a6]" />
        </label>
      </div>
      <div className="grid min-h-0 flex-1 grid-cols-[746px_minmax(0,1360px)_1fr] overflow-hidden">
        <Sidebar />
        <main className="bg-[#292a2d] pt-[7px] pr-[39px] pl-[118px] shadow-[0_0_6px_rgba(0,0,0,0.5)]">
          <PasswordTable />
        </main>
      </div>
    </div>
  );
}

export default function App() {
  return (
    <div className="flex h-screen flex-col overflow-hidden bg-[linear-gradient(180deg,#06182d_0%,#0a1a30_60%,#091427_100%)] font-['Inter','DejaVu_Sans',sans-serif]">
      <MenuBar />
      <div className="flex min-h-0 flex-1">
        <Dock />
        <div className="mt-0.5 ml-0.5 flex min-w-0 flex-1 flex-col overflow-hidden rounded-t-xl rounded-b-lg border-2 border-t-[#7b8c8d] border-r-[#4d5557] border-b-[#5b5d60] border-l-[#4d5557] shadow-[0_0_24px_rgba(0,0,0,0.9)]">
          <div className="relative shrink-0 border-b-2 border-black bg-[linear-gradient(90deg,rgba(110,140,145,0.12)_0%,rgba(0,15,10,0.12)_40%,rgba(110,140,145,0.1)_60%,rgba(0,15,10,0.14)_78%,rgba(0,0,0,0)_100%),linear-gradient(180deg,#344b4c_0%,#3a5052_25%,#465c60_45%,#536a70_62%,#647b84_82%,#738a96_100%)]">
            {/* rain drops of the theme picture, repeated along its width */}
            <div className="pointer-events-none absolute inset-x-0 bottom-0 flex h-6 items-end justify-between pr-[308px] pl-[468px]">
              <span className="h-2.5 w-3 rounded-t-full bg-[#c3d8e2]" />
              <span className="h-2.5 w-3 rounded-t-full bg-[#c3d8e2]" />
              <span className="h-2.5 w-3 rounded-t-full bg-[#c3d8e2]" />
            </div>
            <TabStrip />
            <Toolbar />
            <BookmarksBar />
          </div>
          <SettingsPage />
        </div>
      </div>
    </div>
  );
}
